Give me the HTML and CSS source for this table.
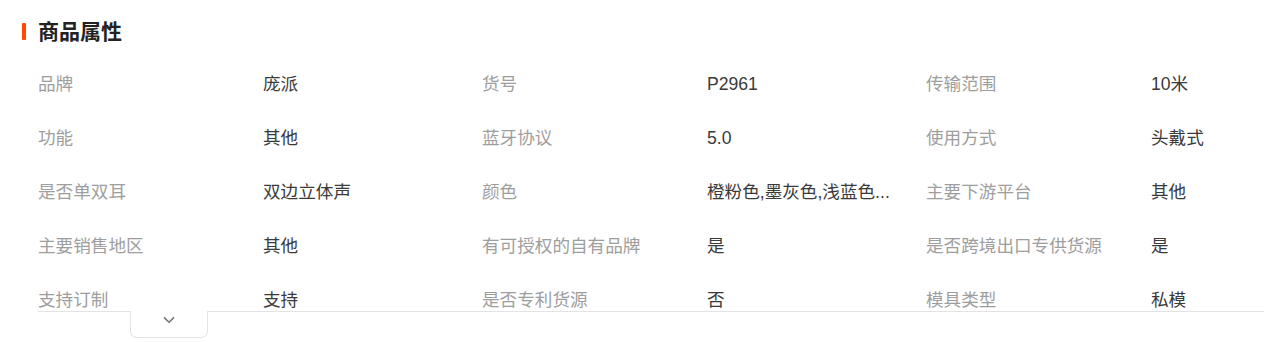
FILE: index.html
```html
<!DOCTYPE html>
<html lang="zh-CN">
<head>
<meta charset="utf-8">
<link rel="stylesheet" href="styles.css">
</head>
<body>
<section class="attrs">
  <h2 class="attrs-title"><span class="bar"></span>商品属性</h2>
  <div class="attrs-box">
    <div class="attrs-grid">
      <div class="lbl">品牌</div><div class="val">庞派</div>
      <div class="lbl">货号</div><div class="val">P2961</div>
      <div class="lbl">传输范围</div><div class="val">10米</div>

      <div class="lbl">功能</div><div class="val">其他</div>
      <div class="lbl">蓝牙协议</div><div class="val">5.0</div>
      <div class="lbl">使用方式</div><div class="val">头戴式</div>

      <div class="lbl">是否单双耳</div><div class="val">双边立体声</div>
      <div class="lbl">颜色</div><div class="val">橙粉色,墨灰色,浅蓝色...</div>
      <div class="lbl">主要下游平台</div><div class="val">其他</div>

      <div class="lbl">主要销售地区</div><div class="val">其他</div>
      <div class="lbl">有可授权的自有品牌</div><div class="val">是</div>
      <div class="lbl">是否跨境出口专供货源</div><div class="val">是</div>

      <div class="lbl">支持订制</div><div class="val">支持</div>
      <div class="lbl">是否专利货源</div><div class="val">否</div>
      <div class="lbl">模具类型</div><div class="val">私模</div>
    </div>
  </div>
  <button class="toggle" type="button" aria-label="展开">
    <svg width="12" height="8" viewBox="0 0 12 8"><path d="M1 1.4 L6 6.2 L11 1.4" fill="none" stroke="#707070" stroke-width="1.5"/></svg>
  </button>
</section>
</body>
</html>
```

FILE: styles.css
```css
html, body {
  margin: 0;
  padding: 0;
  background: #fff;
  overflow: hidden;
}
body {
  font-family: "Liberation Sans", "Noto Sans CJK SC", sans-serif;
  color: #333;
}
.attrs {
  padding-top: 23px;
}
.attrs-title {
  display: flex;
  align-items: center;
  gap: 12px;
  margin: 0 0 0 22px;
  height: 17px;
  font-size: 21px;
  line-height: 17px;
  font-weight: bold;
  color: #222;
}
.bar {
  width: 4px;
  height: 17px;
  background: #ff4a00;
  border-radius: 1px;
}
.attrs-box {
  margin: 17px 0 0 38px;
  height: 254px;
  overflow: hidden;
  border-bottom: 1px solid #e3e3e3;
}
.attrs-grid {
  display: grid;
  grid-template-columns: 225px 219px 225px 219px 225px 1fr;
  grid-auto-rows: 54px;
  font-size: 17.6px;
  line-height: 54px;
}
.lbl {
  color: #9e9e9e;
  white-space: nowrap;
}
.val {
  color: #3a3a3a;
  white-space: nowrap;
  overflow: hidden;
}
.toggle {
  display: flex;
  align-items: center;
  justify-content: center;
  margin: -1px 0 0 130px;
  width: 78px;
  height: 27px;
  padding: 0 0 9px;
  background: #fff;
  border: 1px solid #e3e3e3;
  border-top: none;
  border-radius: 0 0 7px 7px;
  cursor: pointer;
}
```
